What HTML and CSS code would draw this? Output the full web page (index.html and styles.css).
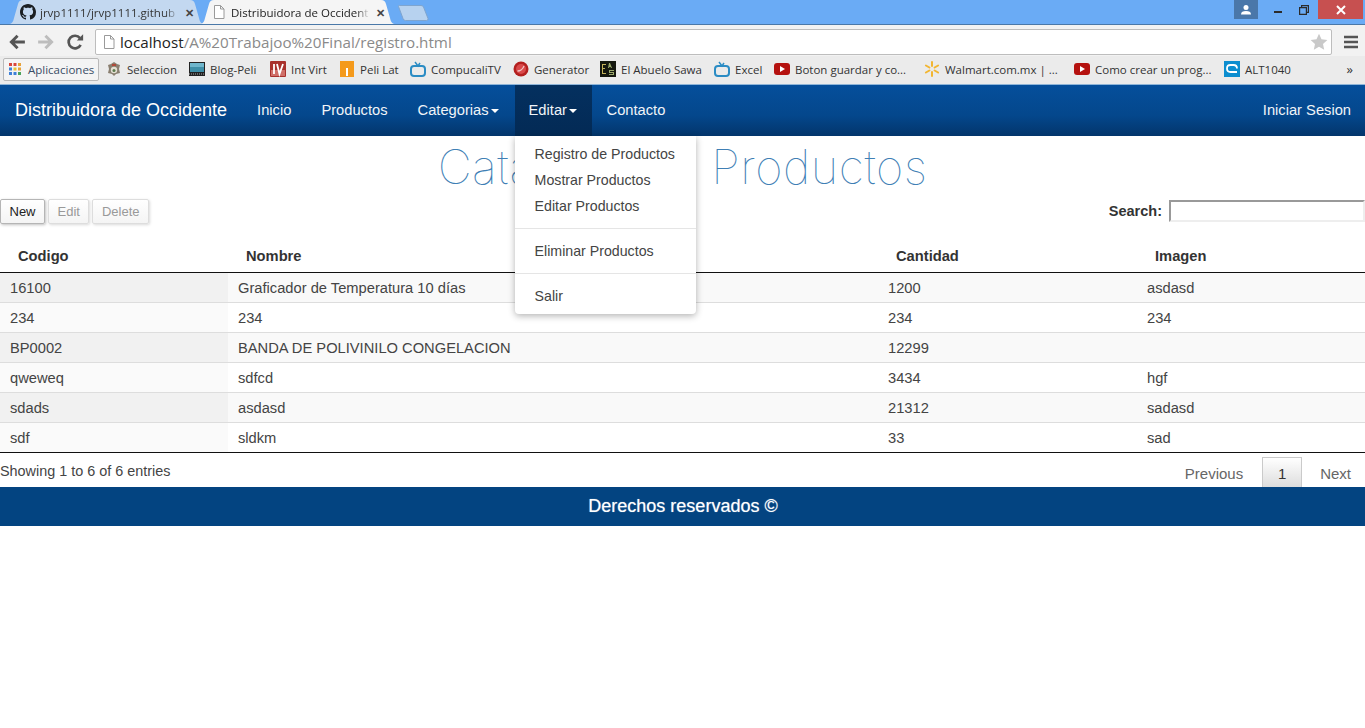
FILE: index.html
```html
<!DOCTYPE html>
<html>
    <head>
        <meta charset="utf-8">
        <title>Distribuidora de Occidente</title>
        <link rel="stylesheet" href="styles.css">
    </head>
    <body>
        <div class="tabstrip">
            <div class="tab tab-off">
                <svg class="fav" viewBox="0 0 16 16"><path fill="#1b1f23" d="M8 0C3.58 0 0 3.58 0 8c0 3.54 2.29 6.53 5.47 7.59.4.07.55-.17.55-.38 0-.19-.01-.82-.01-1.49-2.01.37-2.53-.49-2.69-.94-.09-.23-.48-.94-.82-1.13-.28-.15-.68-.52-.01-.53.63-.01 1.08.58 1.23.82.72 1.21 1.87.87 2.33.66.07-.52.28-.87.51-1.07-1.78-.2-3.64-.89-3.64-3.95 0-.87.31-1.59.82-2.15-.08-.2-.36-1.02.08-2.12 0 0 .67-.21 2.2.82.64-.18 1.32-.27 2-.27.68 0 1.36.09 2 .27 1.53-1.04 2.2-.82 2.2-.82.44 1.1.16 1.92.08 2.12.51.56.82 1.27.82 2.15 0 3.07-1.87 3.75-3.65 3.95.29.25.54.73.54 1.48 0 1.07-.01 1.93-.01 2.2 0 .21.15.46.55.38A8.013 8.013 0 0016 8c0-4.42-3.58-8-8-8z"/></svg>
                <span class="tab-title">jrvp1111/jrvp1111.github</span>
                <span class="tab-x">✕</span>
            </div>
            <div class="tab tab-on">
                <svg class="fav" viewBox="0 0 16 16"><path fill="#fff" stroke="#9a9a9a" d="M3.5 1.5h6l3.5 3.5v9.5h-9.5z M9.5 1.5v3.5h3.5"/></svg>
                <span class="tab-title">Distribuidora de Occident</span>
                <span class="tab-x">✕</span>
            </div>
            <svg class="tab-new" viewBox="0 0 32 16"><path fill="#b7d2ef" stroke="#7fa5cf" d="M1.500 1.500Q1 .5 2.500.5H24q2 0 2.500 1.500L31 13.500q.5 2-1.500 2H8.500q-2 0-2.500-2z"/></svg>
            <div class="window-btns">
                <div class="win-user">
                    <svg width="12" height="10" viewBox="0 0 12 10"><circle cx="6" cy="2.6" r="2.5" fill="#fff"/><path fill="#fff" d="M1 9.5c0-2.6 2-3.5 5-3.5s5 .9 5 3.5z"/></svg>
                </div>
                <div class="win-min"><span></span></div>
                <div class="win-max">
                    <svg width="10" height="10" viewBox="0 0 10 10"><path fill="none" stroke="#2b2b2b" stroke-width="1.2" d="M.6 2.6h6.8v6.8H.6z M2.6 2.6V.6h6.8v6.8H7.4"/></svg>
                </div>
                <div class="win-close">
                    <svg width="10" height="10" viewBox="0 0 10 10"><path stroke="#fff" stroke-width="2" d="M1 1l8 8M9 1l-8 8"/></svg>
                </div>
            </div>
        </div>

        <div class="toolbar">
            <svg class="tool-icon" viewBox="0 0 16 16"><path fill="none" stroke="#555" stroke-width="2.6" d="M15 8H3M8.5 2.5L3 8l5.5 5.5"/></svg>
            <svg class="tool-icon" viewBox="0 0 16 16"><path fill="none" stroke="#bdbdbd" stroke-width="2.6" d="M1 8h12M7.5 2.5L13 8l-5.5 5.5"/></svg>
            <svg class="tool-icon" viewBox="0 0 16 16"><path fill="none" stroke="#555" stroke-width="2.4" d="M13 10.5A5.6 5.6 0 1 1 12.4 4.6"/><path fill="#555" d="M9.6 6.6h5.6V1z"/></svg>
            <div class="omnibox">
                <svg class="fav" viewBox="0 0 16 16"><path fill="#fff" stroke="#9a9a9a" d="M3.5 1.5h6l3.5 3.5v9.5h-9.5z M9.5 1.5v3.5h3.5"/></svg>
                <span class="url"><b>localhost</b>/A%20Trabajoo%20Final/registro.html</span>
                <svg class="star" viewBox="0 0 18 18"><path fill="#c9c9c9" d="M9 .8l2.5 5.4 5.9.7-4.4 4 1.2 5.8L9 13.8l-5.2 2.9L5 10.9.6 6.9l5.9-.7z"/></svg>
            </div>
            <svg class="tool-menu" viewBox="0 0 14 14"><path stroke="#555" stroke-width="2.4" d="M0 2h14M0 7h14M0 12h14"/></svg>
        </div>

        <div class="bookmarks">
            <div class="bm bm-apps">
                <svg class="fav" viewBox="0 0 16 16">
                    <g fill="#d9453a"><rect x="2" y="2" width="3" height="3"/><rect x="6.5" y="2" width="3" height="3"/></g>
                    <rect x="11" y="2" width="3" height="3" fill="#e8a33a"/>
                    <rect x="2" y="6.500" width="3" height="3" fill="#3d80d8"/>
                    <rect x="6.5" y="6.500" width="3" height="3" fill="#e8c23a"/>
                    <rect x="11" y="6.500" width="3" height="3" fill="#e8a33a"/>
                    <rect x="2" y="11" width="3" height="3" fill="#3d80d8"/>
                    <rect x="6.5" y="11" width="3" height="3" fill="#3d80d8"/>
                    <rect x="11" y="11" width="3" height="3" fill="#4aa35a"/>
                </svg>
                <span class="bm-apps-label">Aplicaciones</span>
            </div>
            <div class="bm">
                <svg class="fav" viewBox="0 0 16 16"><path fill="#8a7f70" d="M8 1l3 2 3 1-1 4 1 4-4 1-2 2-2-2-4-1 1-4-1-4 3-1z"/><circle cx="8" cy="9" r="3.200" fill="#e4e0d4"/><circle cx="8" cy="9.500" r="1.500" fill="#5d7a4e"/><path fill="#b04a3a" d="M6 3h4v2H6z"/></svg>
                <span>Seleccion</span>
            </div>
            <div class="bm">
                <svg class="fav" viewBox="0 0 16 16"><rect y="1" width="16" height="14" fill="#222"/><rect x="1" y="2" width="14" height="9" fill="#3f8fa8"/><rect x="1" y="2" width="14" height="4" fill="#6fb6cc"/><path stroke="#aaa" stroke-dasharray="1 1" d="M0 13h16"/></svg>
                <span>Blog-Peli</span>
            </div>
            <div class="bm">
                <svg class="fav" viewBox="0 0 16 16"><rect width="16" height="16" rx="1" fill="#a8312c"/><rect x="1" y="9" width="14" height="6" fill="#cf6f68"/><path fill="none" stroke="#fff" stroke-width="1.800" d="M4 3v10M7 3l2.500 10L13 3"/></svg>
                <span>Int Virt</span>
            </div>
            <div class="bm">
                <svg class="fav" viewBox="0 0 16 16"><rect x="1" width="14" height="16" fill="#f49a1c"/><rect x="7" y="7" width="2" height="8" fill="#fff"/></svg>
                <span>Peli Lat</span>
            </div>
            <div class="bm">
                <svg class="fav" viewBox="0 0 16 16"><rect x="1" y="5" width="14" height="10" rx="3" fill="none" stroke="#2b8cc4" stroke-width="2"/><path fill="none" stroke="#2b8cc4" stroke-width="1.500" d="M5 1l3 4 2-3"/></svg>
                <span>CompucaliTV</span>
            </div>
            <div class="bm">
                <svg class="fav" viewBox="0 0 16 16"><circle cx="8" cy="8" r="7.500" fill="#b3201f"/><circle cx="8" cy="8" r="5" fill="#d9494a"/><path fill="none" stroke="#f3c4c4" stroke-width="1.300" d="M4.500 10C7 10 10 8 11 5"/></svg>
                <span>Generator</span>
            </div>
            <div class="bm">
                <svg class="fav" viewBox="0 0 16 16"><rect width="16" height="16" fill="#15180f"/><path fill="#c3b25a" d="M2 3h4v1H3v3h2v1H3v4h3v1H2z"/><path fill="#9aa86a" d="M9 2h1l2 5h-1l-.4-1H9.400L9 7H8z M9 9h5v1h-4v1h4v3H9v-1h4v-1H9z"/></svg>
                <span>El Abuelo Sawa</span>
            </div>
            <div class="bm">
                <svg class="fav" viewBox="0 0 16 16"><rect x="1" y="5" width="14" height="10" rx="3" fill="none" stroke="#2b8cc4" stroke-width="2"/><path fill="none" stroke="#2b8cc4" stroke-width="1.500" d="M5 1l3 4 2-3"/></svg>
                <span>Excel</span>
            </div>
            <div class="bm">
                <svg class="fav" viewBox="0 0 16 16"><rect y="2" width="16" height="12" rx="3" fill="#b5120f"/><path fill="#fff" d="M6 5l5 3-5 3z"/></svg>
                <span>Boton guardar y co...</span>
            </div>
            <div class="bm">
                <svg class="fav" viewBox="0 0 16 16"><path stroke="#f2b632" stroke-width="2" stroke-linecap="round" d="M8 1v4M8 11v4M1.900 4.500l3.500 2M10.600 9.500l3.500 2M1.900 11.500l3.500-2M10.600 6.500l3.500-2"/></svg>
                <span>Walmart.com.mx | ...</span>
            </div>
            <div class="bm">
                <svg class="fav" viewBox="0 0 16 16"><rect y="2" width="16" height="12" rx="3" fill="#b5120f"/><path fill="#fff" d="M6 5l5 3-5 3z"/></svg>
                <span>Como crear un prog...</span>
            </div>
            <div class="bm">
                <svg class="fav" viewBox="0 0 16 16"><rect width="16" height="16" fill="#0d8ecf"/><path fill="none" stroke="#fff" stroke-width="1.800" d="M13 11H6.500C4 11 3 9.500 3 7.500S4 4 6.500 4h3C12 4 13 5.500 13 7.500"/></svg>
                <span>ALT1040</span>
            </div>
            <div class="bm-more">»</div>
        </div>

        <nav class="navbar">
            <a class="brand">Distribuidora de Occidente</a>
            <a class="nav-link">Inicio</a>
            <a class="nav-link">Productos</a>
            <a class="nav-link">Categorias<i class="caret"></i></a>
            <div class="nav-drop">
                <a class="nav-link nav-open">Editar<i class="caret"></i></a>
                <ul class="drop-menu">
                    <li>Registro de Productos</li>
                    <li>Mostrar Productos</li>
                    <li>Editar Productos</li>
                    <li class="divider"></li>
                    <li>Eliminar Productos</li>
                    <li class="divider"></li>
                    <li>Salir</li>
                </ul>
            </div>
            <a class="nav-link">Contacto</a>
            <a class="nav-link nav-right">Iniciar Sesion</a>
        </nav>

        <main>
            <h1 class="page-title">Catalogo de Productos</h1>

            <div class="table-tools">
                <div class="btn-row">
                    <button class="dt-btn">New</button>
                    <button class="dt-btn dt-off">Edit</button>
                    <button class="dt-btn dt-off">Delete</button>
                </div>
                <label class="search">Search: <input type="text"></label>
            </div>

            <table class="grid">
                <colgroup>
                    <col class="col-a"><col class="col-b"><col class="col-c"><col class="col-d">
                </colgroup>
                <thead>
                    <tr><th>Codigo</th><th>Nombre</th><th>Cantidad</th><th>Imagen</th></tr>
                </thead>
                <tbody>
                    <tr><td>16100</td><td>Graficador de Temperatura 10 días</td><td>1200</td><td>asdasd</td></tr>
                    <tr><td>234</td><td>234</td><td>234</td><td>234</td></tr>
                    <tr><td>BP0002</td><td>BANDA DE POLIVINILO CONGELACION</td><td>12299</td><td></td></tr>
                    <tr><td>qweweq</td><td>sdfcd</td><td>3434</td><td>hgf</td></tr>
                    <tr><td>sdads</td><td>asdasd</td><td>21312</td><td>sadasd</td></tr>
                    <tr><td>sdf</td><td>sldkm</td><td>33</td><td>sad</td></tr>
                </tbody>
            </table>

            <div class="table-foot">
                <div class="info">Showing 1 to 6 of 6 entries</div>
                <div class="pager">
                    <a class="prev">Previous</a>
                    <a class="current">1</a>
                    <a class="next">Next</a>
                </div>
            </div>
        </main>

        <footer>Derechos reservados ©</footer>
    </body>
</html>
```
FILE: styles.css
```css
* { box-sizing: border-box; }

body {
    margin: 0; padding: 0;
    background: #fff;
    color: #444;
    font-family: "Liberation Sans", Arial, sans-serif;
    font-size: 14.7px;
}

svg { display: block; flex: none; }
.fav { width: 16px; height: 16px; }

/* browser window */
.tabstrip {
    display: flex;
    height: 25px;
    padding-left: 8px;
    background: #6aabf5;
    border-bottom: 1px solid #4a78a8;
}
.tab {
    display: flex;
    align-items: center;
    width: 197px;
    height: 24px;
    margin-right: -6px;
    padding: 0 11px 0 12px;
    font-family: "Open Sans", sans-serif;
    font-size: 11.5px;
    clip-path: path("M0 24C4 24 5 22 6 18L10 4C11 1 12 0 15 0L182 0C185 0 186 1 187 4L191 18C192 22 193 24 197 24Z");
}
.tab-off { background: #c3d8f0; color: #333; }
.tab-on { background: #f5f5f5; color: #222; }
.tab-title {
    flex: 1;
    min-width: 0;
    margin-left: 4px;
    overflow: hidden;
    white-space: nowrap;
    -webkit-mask-image: linear-gradient(90deg, #000 90%, transparent);
    mask-image: linear-gradient(90deg, #000 90%, transparent);
}
.tab-x { margin-left: 6px; font-size: 11px; font-weight: bold; color: #444; }
.tab-new {
    width: 32px;
    height: 16px;
    margin: 5px 0 0 7px;
}
.window-btns {
    display: flex;
    height: 19px;
    margin-left: auto;
    padding-right: 2px;
}
.win-user {
    display: flex;
    align-items: center;
    justify-content: center;
    width: 24px;
    background: #4a77a9;
}
.win-min {
    display: flex;
    align-items: center;
    justify-content: center;
    width: 37px;
    padding: 5px 0 0 3px;
}
.win-min span { width: 8px; height: 2px; background: #2b2b2b; }
.win-max {
    display: flex;
    align-items: center;
    justify-content: center;
    width: 23px;
    padding-right: 6px;
}
.win-close {
    display: flex;
    align-items: center;
    justify-content: center;
    width: 45px;
    background: #c75050;
}

.toolbar {
    display: flex;
    align-items: center;
    gap: 10px;
    height: 31px;
    padding: 3px 7px 0 8px;
    background: #f2f2f2;
}
.tool-icon { width: 18px; height: 18px; margin-right: 1px; }
.omnibox {
    display: flex;
    align-items: center;
    flex: 1;
    height: 26px;
    padding: 0 3px 0 5px;
    background: #fff;
    border: 1px solid #bdbdbd;
    border-radius: 2px;
}
.url {
    flex: 1;
    margin-left: 3px;
    font-family: "Open Sans", sans-serif;
    font-size: 15.2px;
    color: #8a8a8a;
}
.url b { font-weight: 400; color: #222; }
.star { width: 18px; height: 18px; }
.tool-menu { width: 14px; height: 14px; margin-left: 2px; }

.bookmarks {
    display: grid;
    grid-template-columns: 103px 83px 81px 69px 71px 103px 87px 114px 60px 150px 150px 150px 121px 1fr;
    align-items: center;
    height: 29px;
    padding: 0 0 2px 3px;
    background: #ebebeb;
    border-bottom: 1px solid #8fb5d8;
    font-family: "Open Sans", sans-serif;
    font-size: 11.5px;
    color: #333;
}
.bm {
    display: flex;
    align-items: center;
    gap: 5px;
    white-space: nowrap;
    overflow: hidden;
}
.bm-apps {
    width: 96px;
    height: 23px;
    padding-left: 3px;
    border: 1px solid #b9b9b9;
    border-radius: 2px;
    background: #f4f4f4;
}
.bm-apps-label { color: #3a4d66; font-size: 11.5px; }
.bm-more { padding-right: 12px; text-align: right; font-size: 13px; }

/* page */
.navbar {
    display: flex;
    height: 51px;
    background: linear-gradient(#054f9b, #04478c 60%, #03356b);
    color: #fff;
}
.brand {
    padding: 0 15px;
    font-size: 18px;
    line-height: 50px;
}
.nav-link {
    display: block;
    height: 51px;
    padding: 0 15px;
    font-size: 14.7px;
    line-height: 50px;
    color: #f0f4f8;
}
.nav-right { margin-left: auto; padding-right: 14px; }
.nav-drop { position: relative; margin-left: 1px; }
.nav-open {
    width: 77px;
    padding: 0 14px;
    background: linear-gradient(#04305f, #032a55);
}
.caret {
    display: inline-block;
    margin-left: 2px;
    vertical-align: middle;
    border-top: 4px solid #fff;
    border-left: 4px solid transparent;
    border-right: 4px solid transparent;
}
.drop-menu {
    position: absolute;
    top: 51px;
    left: 0;
    z-index: 5;
    width: 181px;
    height: 178px;
    margin: 0;
    padding: 5px 0;
    list-style: none;
    background: #fff;
    border-radius: 0 0 4px 4px;
    box-shadow: 0 2px 7px rgba(0, 0, 0, .3);
    color: #444;
    font-size: 14.2px;
}
.drop-menu li {
    height: 26px;
    padding-left: 20px;
    line-height: 26px;
}
.drop-menu .divider {
    height: 1px;
    margin: 9px 0;
    background: #e5e5e5;
}

.page-title {
    height: 63px;
    margin: 0;
    font-family: Inter, sans-serif;
    font-size: 47px;
    font-weight: 100;
    letter-spacing: .5px;
    line-height: 61px;
    text-align: center;
    color: #3f7fb5;
}
.table-tools {
    display: flex;
    align-items: flex-start;
    justify-content: space-between;
    height: 39px;
}
.btn-row { display: flex; gap: 3px; }
.dt-btn {
    height: 25px;
    padding: 0 8.5px;
    font-family: inherit;
    font-size: 13px;
    color: #222;
    background: linear-gradient(#fff, #f4f4f4);
    border: 1px solid #b5b5b5;
    border-radius: 2px;
    box-shadow: 1px 1px 3px rgba(0, 0, 0, .25);
}
.dt-off {
    color: #999;
    border-color: #ddd;
    box-shadow: 1px 1px 3px rgba(0, 0, 0, .15);
}
.search {
    display: flex;
    align-items: center;
    gap: 3px;
    height: 23px;
    font-size: 14.5px;
    font-weight: bold;
    color: #333;
    white-space: pre;
}
.search input {
    width: 196px;
    height: 22px;
    padding: 0;
    background: #fff;
    border: 2px solid;
    border-color: #999 #eee #eee #999;
    border-radius: 0;
}

.grid {
    width: 100%;
    border-collapse: separate;
    border-spacing: 0;
    table-layout: fixed;
}
.col-a { width: 228px; }
.col-b { width: 650px; }
.col-c { width: 259px; }
.col-d { width: 228px; }
.grid th {
    height: 35px;
    padding: 2px 18px 0;
    text-align: left;
    color: #333;
    border-bottom: 1px solid #111;
}
.grid td {
    height: 30px;
    padding: 0 10px;
    border-bottom: 1px solid #ddd;
}
.grid tr:nth-child(odd) td { background: #f9f9f9; }
.grid tr:nth-child(odd) td:first-child { background: #f1f1f1; }
.grid tr:nth-child(even) td:first-child { background: #fafafa; }
.grid tr:last-child td { border-bottom-color: #111; }

.table-foot {
    display: flex;
    justify-content: space-between;
    height: 34px;
    overflow: hidden;
}
.info { padding-top: 10px; font-size: 14.4px; }
.pager {
    display: flex;
    align-items: flex-start;
    padding: 4px 14px 0 0;
    font-size: 15px;
    color: #666;
}
.prev { padding: 8px 19px 0 0; }
.next { padding: 8px 0 0 18px; }
.current {
    width: 40px;
    height: 32px;
    padding-top: 7px;
    text-align: center;
    color: #333;
    background: linear-gradient(#fff, #dcdcdc);
    border: 1px solid #cacaca;
}

footer {
    height: 39px;
    padding-left: 1px;
    background: #034481;
    color: #fff;
    font-size: 18px;
    line-height: 38px;
    text-align: center;
    text-shadow: 0 0 1px rgba(255, 255, 255, .6);
}
```
